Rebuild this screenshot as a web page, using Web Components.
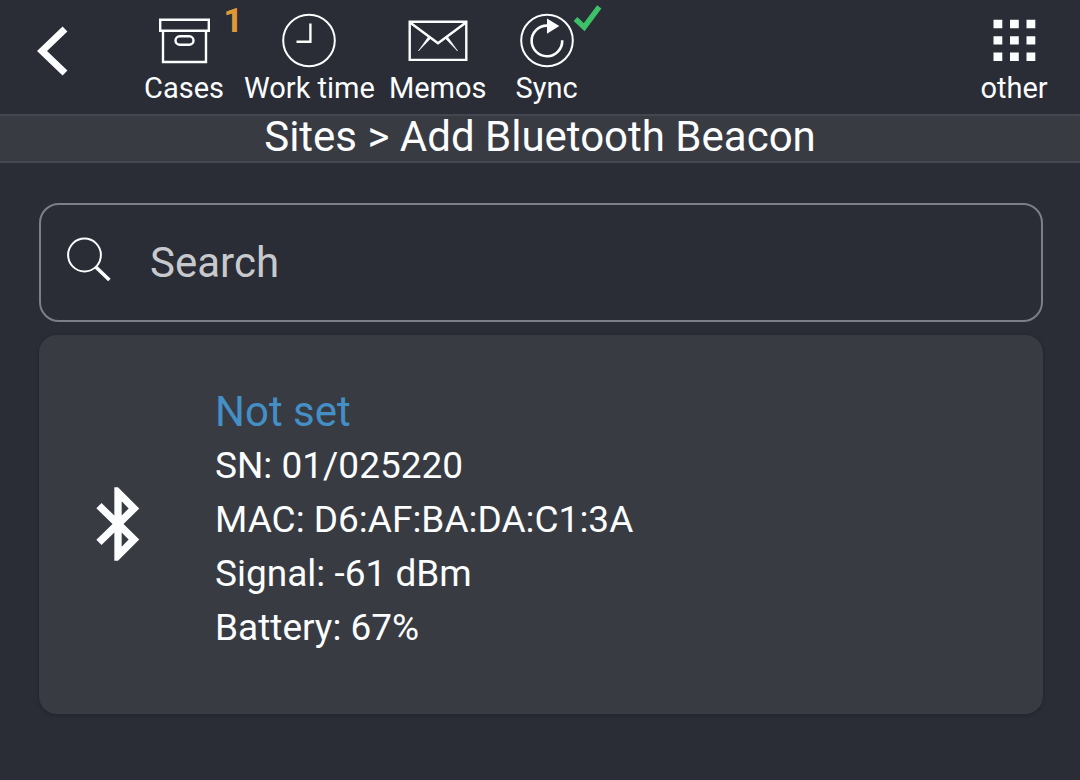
<!DOCTYPE html>
<html lang="en">
<head>
<meta charset="utf-8">
<meta name="viewport" content="width=device-width, initial-scale=1">
<title>Add Bluetooth Beacon</title>
<style>
  :root {
    --bg: #2a2c36;
    --surface: #393b43;
    --divider: #454750;
    --outline: #7d7f86;
    --text: #fcfdff;
    --muted: #c8c9cd;
    --accent: #438fc6;
    --warning: #e09a35;
    --success: #3cc168;
  }

  body {
    margin: 0;
    min-height: 100vh;
    background: var(--bg);
    color: var(--text);
    font-family: Roboto, "Noto Sans", sans-serif;
  }

  main {
    display: grid;
    gap: 13px;
    padding: 40px 37px 40px 39px;
  }
</style>
</head>
<body>
<top-bar>
  <back-button slot="start"></back-button>
  <nav-item icon="cases">Cases<span slot="badge">1</span></nav-item>
  <nav-item icon="clock">Work time</nav-item>
  <nav-item icon="mail">Memos</nav-item>
  <nav-item icon="sync">Sync<app-icon slot="badge" name="check"></app-icon></nav-item>
  <nav-item slot="end" icon="grid">other</nav-item>
</top-bar>
<page-title>Sites &gt; Add Bluetooth Beacon</page-title>
<main>
  <search-field placeholder="Search"></search-field>
  <beacon-card serial="01/025220" mac="D6:AF:BA:DA:C1:3A" signal="-61" battery="67">Not set</beacon-card>
</main>

<script>
const ICONS = {
  back: {
    width: 32, height: 50,
    body: '<path d="M28 3 5 25l23 22" stroke-width="7"/>'
  },
  cases: {
    width: 64, height: 64,
    body: `<g stroke-width="2.4">
      <path d="M8.2 11.7h48.6v11H8.2z"/>
      <path d="M11 22.7v31.3h43V22.7"/>
      <rect x="23.5" y="28.3" width="18" height="8.4" rx="4.2"/>
    </g>`
  },
  clock: {
    width: 64, height: 64,
    body: `<circle cx="32" cy="32.5" r="25.8" stroke-width="2"/>
      <path d="M33.4 15.5v18.2H19.5" stroke-width="2.4"/>`
  },
  mail: {
    width: 64, height: 64,
    body: `<path d="M3.7 13.7h56.6v38.2H3.7z" stroke-width="2.4"/>
      <path d="M4 14.5 32 35.2 60 14.5" stroke-width="2.6"/>
      <path d="m22.6 28.6 2.2 1.6L12.4 43zm18.8 0-2.2 1.6L51.6 43z" fill="currentColor" stroke-width=".6"/>`
  },
  sync: {
    width: 64, height: 64,
    body: `<circle cx="32" cy="32.5" r="25.8" stroke-width="2"/>
      <path d="M47.2 32.2A15.3 15.3 0 1 1 32 17.6" stroke-width="2.6"/>
      <path d="M32 10.5 44.3 18 32 25.8z" fill="currentColor" stroke="none"/>`
  },
  grid: {
    width: 64, height: 64,
    body: `<g fill="currentColor" stroke="none">
      <path d="M11.5 11.8h8.8v8.4h-8.8zm16.5 0h8.8v8.4H28zm16.5 0h8.8v8.4h-8.8z"/>
      <path d="M11.5 28.2h8.8v8.4h-8.8zm16.5 0h8.8v8.4H28zm16.5 0h8.8v8.4h-8.8z"/>
      <path d="M11.5 44.6h8.8V53h-8.8zm16.5 0h8.8V53H28zm16.5 0h8.8V53h-8.8z"/>
    </g>`
  },
  check: {
    width: 30, height: 28,
    body: '<path d="m3.5 15 8.7 8.2L27.3 2.8" stroke-width="5.4"/>'
  },
  search: {
    width: 46, height: 46,
    body: `<circle cx="18.5" cy="19" r="16.4" stroke-width="2"/>
      <path d="m29.8 31 13.6 13" stroke-width="3.6"/>`
  },
  bluetooth: {
    width: 44, height: 74,
    viewBox: '6 2 12 20',
    body: `<path fill="currentColor" stroke="none" fill-rule="evenodd"
      d="M17.8 7.75 12 2h-1v7.7L7.5 6.3 6.1 7.7l4.4 4.3-4.4 4.3 1.4 1.4 3.5-3.4V22h1l5.8-5.75L13.5 12zM13 5.8l1.9 1.95L13 9.65zm0 8.55 1.9 1.9-1.9 1.95z"/>`
  }
};

class AppIcon extends HTMLElement {
  connectedCallback() {
    if (this.shadowRoot) return;
    const icon = ICONS[this.getAttribute('name')];
    const viewBox = icon.viewBox || `0 0 ${icon.width} ${icon.height}`;
    this.attachShadow({ mode: 'open' }).innerHTML = `
      <style>
        :host { display: inline-flex; flex: none; }
        svg { display: block; fill: none; stroke: currentColor; }
      </style>
      <svg width="${icon.width}" height="${icon.height}" viewBox="${viewBox}" aria-hidden="true">${icon.body}</svg>
    `;
  }
}

class TopBar extends HTMLElement {
  constructor() {
    super();
    this.attachShadow({ mode: 'open' }).innerHTML = `
      <style>
        :host { display: block; }
        header {
          display: flex;
          align-items: flex-start;
          padding: 8px 13px 10px 0;
        }
        nav { display: flex; flex: 1; }
      </style>
      <header>
        <slot name="start"></slot>
        <nav aria-label="Main"><slot></slot></nav>
        <slot name="end"></slot>
      </header>
    `;
  }
}

class BackButton extends HTMLElement {
  constructor() {
    super();
    this.attachShadow({ mode: 'open' }).innerHTML = `
      <style>
        :host { display: block; }
        button {
          display: flex;
          width: 131px;
          padding: 18px 0 18px 37px;
          border: none;
          background: transparent;
          color: inherit;
          cursor: pointer;
        }
      </style>
      <button type="button" aria-label="Back"><app-icon name="back"></app-icon></button>
    `;
  }
}

class NavItem extends HTMLElement {
  connectedCallback() {
    if (this.shadowRoot) return;
    this.attachShadow({ mode: 'open' }).innerHTML = `
      <style>
        :host { display: block; }
        button {
          position: relative;
          display: flex;
          flex-direction: column;
          align-items: center;
          min-width: 106px;
          padding: 0 7px;
          border: none;
          background: transparent;
          color: inherit;
          font: 29px/32px Roboto, "Noto Sans", sans-serif;
          white-space: nowrap;
          cursor: pointer;
        }
        ::slotted([slot="badge"]) {
          position: absolute;
          top: -4px;
          right: -2px;
          color: var(--success);
        }
        ::slotted(span[slot="badge"]) {
          right: -6px;
          color: var(--warning);
          font-size: 34px;
          font-weight: 700;
        }
      </style>
      <button type="button">
        <app-icon name="${this.getAttribute('icon')}"></app-icon>
        <span><slot></slot></span>
        <slot name="badge"></slot>
      </button>
    `;
  }
}

class PageTitle extends HTMLElement {
  constructor() {
    super();
    this.attachShadow({ mode: 'open' }).innerHTML = `
      <style>
        :host {
          display: block;
          border: solid var(--divider);
          border-width: 2px 0;
          background: var(--surface);
        }
        h1 {
          margin: 0;
          padding-bottom: 3px;
          font-size: 42px;
          font-weight: 400;
          line-height: 42px;
          text-align: center;
        }
      </style>
      <h1><slot></slot></h1>
    `;
  }
}

class SearchField extends HTMLElement {
  connectedCallback() {
    if (this.shadowRoot) return;
    const placeholder = this.getAttribute('placeholder');
    this.attachShadow({ mode: 'open' }).innerHTML = `
      <style>
        :host { display: block; }
        label {
          display: flex;
          align-items: center;
          gap: 38px;
          padding: 0 25px;
          border: 2px solid var(--outline);
          border-radius: 20px;
        }
        app-icon { padding-bottom: 8px; }
        input {
          flex: 1;
          min-width: 0;
          height: 115px;
          padding: 0;
          border: none;
          outline: none;
          background: transparent;
          color: inherit;
          font: 42px Roboto, "Noto Sans", sans-serif;
          appearance: none;
        }
        input::placeholder { color: var(--muted); opacity: 1; }
      </style>
      <label>
        <app-icon name="search"></app-icon>
        <input type="search" placeholder="${placeholder}" aria-label="${placeholder}">
      </label>
    `;
  }
}

class BeaconCard extends HTMLElement {
  connectedCallback() {
    if (this.shadowRoot) return;
    this.attachShadow({ mode: 'open' }).innerHTML = `
      <style>
        :host { display: block; }
        article {
          display: grid;
          grid-template-columns: 158px 1fr;
          align-items: center;
          gap: 18px;
          padding: 50px 0 59px;
          border-radius: 18px;
          background: var(--surface);
          box-shadow: 0 1px 4px rgba(0, 0, 0, 0.2);
        }
        app-icon { justify-self: center; padding-top: 8px; }
        h2, p {
          margin: 0;
          font-size: 37px;
          font-weight: 400;
          line-height: 54px;
        }
        h2 { color: var(--accent); font-size: 42px; }
      </style>
      <article>
        <app-icon name="bluetooth"></app-icon>
        <div>
          <h2><slot></slot></h2>
          <p>SN: ${this.getAttribute('serial')}</p>
          <p>MAC: ${this.getAttribute('mac')}</p>
          <p>Signal: ${this.getAttribute('signal')} dBm</p>
          <p>Battery: ${this.getAttribute('battery')}%</p>
        </div>
      </article>
    `;
  }
}

customElements.define('app-icon', AppIcon);
customElements.define('top-bar', TopBar);
customElements.define('back-button', BackButton);
customElements.define('nav-item', NavItem);
customElements.define('page-title', PageTitle);
customElements.define('search-field', SearchField);
customElements.define('beacon-card', BeaconCard);
</script>
</body>
</html>
